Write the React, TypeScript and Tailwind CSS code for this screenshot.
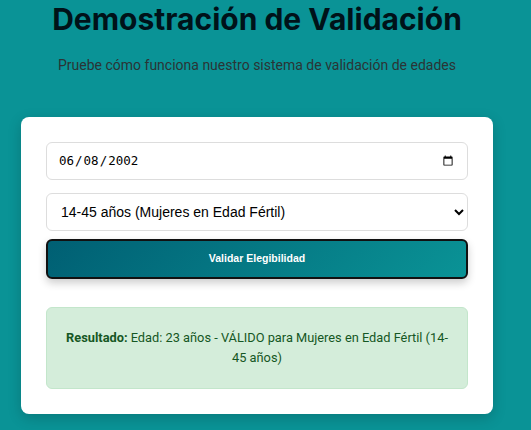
import { useState } from "react";

export default function App() {
  const [birth, setBirth] = useState("2002-06-08");
  const [group, setGroup] = useState("mef");

  return (
    <div className="min-h-[430px] bg-[#0a9396] font-['Roboto',sans-serif]">
      <div className="w-[514px] px-[21px]">
        <h2 className="pt-[1px] text-center font-['Inter',sans-serif] text-[30px] font-bold leading-[36px] text-[#001219]">
          Demostración de Validación
        </h2>
        <p className="mt-[18px] text-center text-[14px] leading-[20px] text-[#2a3435]">
          Pruebe cómo funciona nuestro sistema de validación de edades
        </p>

        <div className="mt-[42px] rounded-lg bg-white p-[25px] shadow-[0_4px_14px_rgba(0,0,0,0.18)]">
          <input
            type="date"
            value={birth}
            onChange={(e) => setBirth(e.target.value)}
            className="block h-[38px] w-full rounded-md border border-[#dddddd] px-[11px] font-['DejaVu_Sans_Mono',monospace] text-[12.5px] text-black"
          />
          <select
            value={group}
            onChange={(e) => setGroup(e.target.value)}
            className="mt-[13px] block h-[38px] w-full rounded-md border border-[#dddddd] bg-white px-[10px] font-['Liberation_Sans',Arial,sans-serif] text-[14px] text-black"
          >
            <option value="mef">14-45 años (Mujeres en Edad Fértil)</option>
            <option value="nin">0-11 años (Niños)</option>
            <option value="ado">12-17 años (Adolescentes)</option>
          </select>
          <button
            type="button"
            className="mt-[8px] block h-[40px] w-full rounded-md border-2 border-[#111] bg-[linear-gradient(135deg,#005f73,#0a9396)] font-['Liberation_Sans',Arial,sans-serif] text-[10.5px] font-bold text-white shadow-[0_4px_8px_rgba(0,0,0,0.2)]"
          >
            Validar Elegibilidad
          </button>

          <div className="mt-[28px] rounded-md border border-[#c3e6cb] bg-[#d4edda] px-4 py-5 text-center text-[12.8px] leading-[20px] text-[#155724]">
            <strong className="font-bold">Resultado:</strong> Edad: 23 años - VÁLIDO para Mujeres en Edad Fértil (14-45 años)
          </div>
        </div>
      </div>
    </div>
  );
}
